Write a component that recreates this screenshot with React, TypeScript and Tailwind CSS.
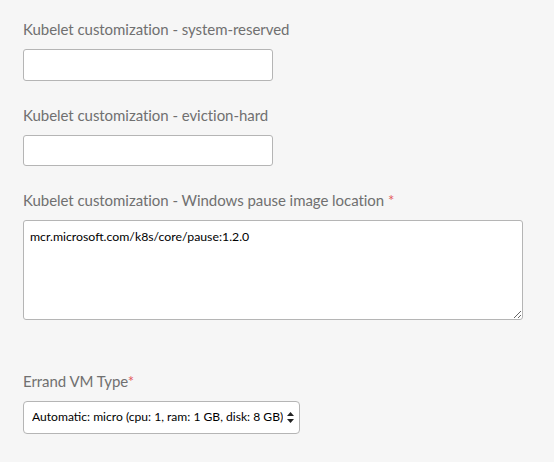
import { useState } from "react";

const labelClass = "block text-[15px] leading-5 text-[#707070] font-['Lato',sans-serif] tracking-[-0.05px]";

const Field = ({ label, required, children, className }: { label: string; required?: boolean; children: React.ReactNode; className?: string }) => (
  <div className={className}>
    <label className={labelClass}>
      {label}
      {required && <span className="text-[#e35a5a]">*</span>}
    </label>
    <div className="mt-[10px]">{children}</div>
  </div>
);

export default function App() {
  const [pause, setPause] = useState("mcr.microsoft.com/k8s/core/pause:1.2.0");

  return (
    <div className="min-h-[462px] w-full bg-[#f6f6f6] px-[23px] pt-[19px] font-['Lato',sans-serif]">
      <Field label="Kubelet customization - system-reserved">
        <input className="block h-[32px] w-[250px] rounded-[3px] border border-[#b5b5b5] bg-white px-2 text-[13px] outline-none" />
      </Field>
      <Field label="Kubelet customization - eviction-hard" className="mt-[24px]">
        <input className="block h-[31px] w-[250px] rounded-[3px] border border-[#b5b5b5] bg-white px-2 text-[13px] outline-none" />
      </Field>
      <Field label="Kubelet customization - Windows pause image location " required className="mt-[24px]">
        <textarea
          value={pause}
          onChange={(e) => setPause(e.target.value)}
          className="block h-[100px] w-[500px] rounded-[3px] border border-[#b5b5b5] bg-white px-[6px] py-[8px] text-[12.3px] leading-4 text-black outline-none"
        />
      </Field>
      <Field label="Errand VM Type" required className="mt-[51px]">
        <div className="relative w-[277px]">
          <select className="block h-[33px] w-full appearance-none rounded-[4px] border border-[#b5b5b5] bg-white pl-[8px] pr-[16px] text-[12.1px] text-black outline-none">
            <option>Automatic: micro (cpu: 1, ram: 1 GB, disk: 8 GB)</option>
          </select>
          <svg className="pointer-events-none absolute right-[6px] top-[11px]" width="7" height="11" viewBox="0 0 7 11">
            <path d="M3.5 0L7 4H0z" fill="#222" />
            <path d="M3.5 11L7 7H0z" fill="#222" />
          </svg>
        </div>
      </Field>
    </div>
  );
}
